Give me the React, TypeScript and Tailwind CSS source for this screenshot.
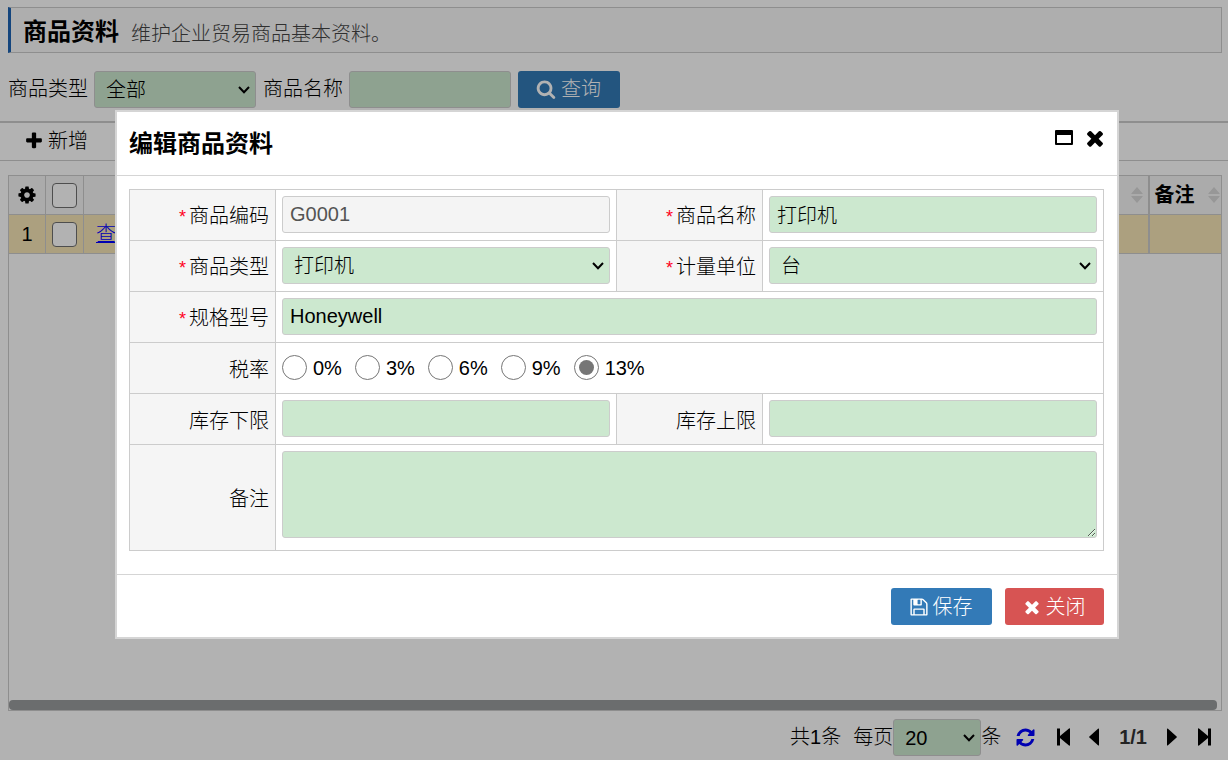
import React from "react";

const PATHS = {
  plus: "M1600 736v192q0 40-28 68t-68 28h-416v416q0 40-28 68t-68 28h-192q-40 0-68-28t-28-68v-416h-416q-40 0-68-28t-28-68v-192q0-40 28-68t68-28h416v-416q0-40 28-68t68-28h192q40 0 68 28t28 68v416h416q40 0 68 28t28 68z",
  search:
    "M1216 832q0-185-131.5-316.5t-316.5-131.5-316.5 131.5-131.5 316.5 131.5 316.5 316.5 131.5 316.5-131.5 131.5-316.5zm512 832q0 52-38 90t-90 38q-54 0-90-38l-343-342q-179 124-399 124-143 0-273.5-55.5t-225-150-150-225-55.5-273.5 55.5-273.5 150-225 225-150 273.5-55.5 273.5 55.5 225 150 150 225 55.5 273.5q0 220-124 399l343 343q37 37 37 90z",
  cog: "M1152 896q0-106-75-181t-181-75-181 75-75 181 75 181 181 75 181-75 75-181zm512-109v222q0 12-8 23t-20 13l-185 28q-19 54-39 91 35 50 107 138 10 12 10 25t-9 23q-27 37-99 108t-94 71q-12 0-26-9l-138-108q-44 23-91 38-16 136-29 186-7 28-36 28h-222q-14 0-24.5-8.5t-11.5-21.5l-28-184q-49-16-90-37l-141 107q-10 9-25 9-14 0-25-11-126-114-165-168-7-10-7-23 0-12 8-23 15-21 51-66.5t54-70.5q-27-50-41-99l-183-27q-13-2-21-12.5t-8-23.5v-222q0-12 8-23t19-13l186-28q14-46 39-92-40-57-107-138-10-12-10-24 0-10 9-23 26-36 98.5-107.5t94.5-71.5q13 0 26 10l138 107q44-23 91-38 16-136 29-186 7-28 36-28h222q14 0 24.5 8.5t11.5 21.5l28 184q49 16 90 37l142-107q9-9 24-9 13 0 25 10 129 119 165 170 7 8 7 22 0 12-8 23-15 21-51 66.5t-54 70.5q26 50 41 98l183 28q13 2 21 12.5t8 23.5z",
  close:
    "M1490 1322q0 40-28 68l-136 136q-28 28-68 28t-68-28l-294-294-294 294q-28 28-68 28t-68-28l-136-136q-28-28-28-68t28-68l294-294-294-294q-28-28-28-68t28-68l136-136q28-28 68-28t68 28l294 294 294-294q28-28 68-28t68 28l136 136q28 28 28 68t-28 68l-294 294 294 294q28 28 28 68z",
  save: "M512 1536h768v-384h-768v384zm896 0h128v-896q0-14-10-38.5t-20-34.5l-281-281q-10-10-34-20t-39-10v416q0 40-28 68t-68 28h-576q-40 0-68-28t-28-68v-416h-128v1280h128v-416q0-40 28-68t68-28h832q40 0 68 28t28 68v416zm-384-928v-320q0-13-9.5-22.5t-22.5-9.5h-192q-13 0-22.5 9.5t-9.5 22.5v320q0 13 9.5 22.5t22.5 9.5h192q13 0 22.5-9.5t9.5-22.5zm640 32v928q0 40-28 68t-68 28h-1344q-40 0-68-28t-28-68v-1344q0-40 28-68t68-28h928q40 0 88 20t76 48l280 280q28 28 48 76t20 88z",
  refresh:
    "M1639 1056q0 5-1 7-64 268-268 434.5t-478 166.5q-146 0-282.5-55t-243.5-157l-129 129q-19 19-45 19t-45-19-19-45v-448q0-26 19-45t45-19h448q26 0 45 19t19 45-19 45l-137 137q71 66 161 102t187 36q134 0 250-65t186-179q11-17 53-117 8-23 30-23h192q13 0 22.5 9.5t9.5 22.5zm25-800v448q0 26-19 45t-45 19h-448q-26 0-45-19t-19-45 19-45l138-138q-148-137-349-137-134 0-250 65t-186 179q-11 17-53 117-8 23-30 23h-199q-13 0-22.5-9.5t-9.5-22.5v-7q65-268 270-434.5t480-166.5q146 0 284 55.5t245 156.5l130-129q19-19 45-19t45 19 19 45z",
};

function Icon({ name, className = "size-5" }: { name: keyof typeof PATHS; className?: string }) {
  return (
    <svg viewBox="0 0 1792 1792" fill="currentColor" aria-hidden="true" className={`block shrink-0 ${className}`}>
      <path d={PATHS[name]} />
    </svg>
  );
}

const FIELD = "block w-full h-[37px] rounded-[3px] border border-[#ccc] text-[20px] font-light outline-none";

function TextField({ id, value, disabled }: { id: string; value?: string; disabled?: boolean }) {
  return (
    <input
      id={id}
      type="text"
      defaultValue={value}
      disabled={disabled}
      className={`${FIELD} px-[7px] ${disabled ? "bg-[#f4f4f4] text-[#545454]" : "bg-[#cce8cf] text-black"}`}
    />
  );
}

function SelectField({ id, value, label }: { id: string; value: string; label?: string }) {
  return (
    <div className="relative">
      <select
        id={id}
        aria-label={label}
        defaultValue={value}
        className={`${FIELD} appearance-none bg-[#cce8cf] pt-px pr-6 pl-[11px] text-black`}
      >
        <option>{value}</option>
      </select>
      <svg
        viewBox="0 0 12 8"
        aria-hidden="true"
        className="pointer-events-none absolute top-[15px] right-[6px] h-2 w-3 fill-none stroke-current stroke-2"
      >
        <path d="M1 1l5 5.200L11 1" />
      </svg>
    </div>
  );
}

function Label({ htmlFor, required, children }: { htmlFor?: string; required?: boolean; children: React.ReactNode }) {
  return (
    <th className="border border-[#ccc] bg-[#f5f5f5] px-[6px] pt-[3px] text-right font-light">
      <label htmlFor={htmlFor} className="whitespace-nowrap">
        {required && <span className="mr-[3px] text-[18px] text-[#ff0022]">*</span>}
        {children}
      </label>
    </th>
  );
}

const CELL = "border border-[#ccc] px-[6px] pt-[6px] pb-[7px]";

function SortIcon() {
  return (
    <svg viewBox="0 0 12 18" aria-hidden="true" className="h-[18px] w-3 shrink-0 fill-[#d8d8d8]">
      <path d="M6 1l6 7H0zM6 17l6-7H0z" />
    </svg>
  );
}

function CheckBox({ label }: { label: string }) {
  return (
    <input
      type="checkbox"
      aria-label={label}
      className="mx-auto block size-[25px] appearance-none rounded-[4px] border border-[#707070] bg-white"
    />
  );
}

function ListPage() {
  return (
    <div className="flex min-h-screen flex-col bg-white pt-[7px]">
      <header className="mr-[6px] ml-2 flex h-[46px] items-center gap-3 border border-l-[3px] border-[#ccc] border-l-[#1e64b4] bg-[#fafafa] pt-1 pl-3">
        <h1 className="text-[24px] leading-8 font-bold">商品资料</h1>
        <p className="pt-[3px] text-[#444]">维护企业贸易商品基本资料。</p>
      </header>

      <form className="mt-[17px] flex h-[38px] items-center px-2" onSubmit={(e) => e.preventDefault()}>
        <label htmlFor="q-type" className="mr-[6px]">
          商品类型
        </label>
        <div className="w-[162px]">
          <SelectField id="q-type" value="全部" />
        </div>
        <label htmlFor="q-name" className="mr-[6px] ml-[7px]">
          商品名称
        </label>
        <div className="w-[162px]">
          <TextField id="q-name" />
        </div>
        <button className="ml-[7px] flex h-[37px] w-[102px] items-center justify-center gap-[5px] rounded-[3px] bg-[#337ab7] pr-px text-white">
          <Icon name="search" />
          查询
        </button>
      </form>

      <div className="mt-[13px] flex h-10 items-center border-t-2 border-b border-[#ccc] pb-[2px] pl-6">
        <button className="flex items-center gap-1">
          <Icon name="plus" />
          新增
        </button>
      </div>

      <div className="mt-[14px] mr-[6px] ml-2 flex flex-1 flex-col justify-between border border-[#ccc]">
        <table className="-mt-px -ml-px w-[calc(100%+2px)] table-fixed border-collapse">
          <thead>
            <tr className="h-[39px] bg-[#f5f5f5]">
              <th className="w-[37px] border border-[#ccc]">
                <button aria-label="列设置" className="mx-auto block">
                  <Icon name="cog" />
                </button>
              </th>
              <th className="w-[38px] border border-[#ccc]">
                <CheckBox label="全选" />
              </th>
              <th className="border border-[#ccc]">
                <div className="flex justify-end pr-[5px]">
                  <SortIcon />
                </div>
              </th>
              <th className="w-[73px] border border-l-2 border-[#ccc]">
                <div className="flex items-center justify-between pr-px pl-[5px] font-bold">
                  备注
                  <SortIcon />
                </div>
              </th>
            </tr>
          </thead>
          <tbody>
            <tr className="h-[39px] bg-[#f7e5b7]">
              <td className="border border-[#ccc] text-center">1</td>
              <td className="border border-[#ccc]">
                <CheckBox label="选择第1行" />
              </td>
              <td className="border border-[#ccc] pl-3">
                <a href="#view" className="text-[#0000ff] underline decoration-1">
                  查看
                </a>
              </td>
              <td className="border border-l-2 border-[#ccc]" />
            </tr>
          </tbody>
        </table>
        <div className="mr-1 h-[10px] rounded-[4px] bg-[#9a9c9e]" />
      </div>

      <footer className="flex h-[49px] items-center justify-end pt-[3px] pr-[17px]">
        <span className="mr-3">共1条</span>
        <label htmlFor="page-size">每页</label>
        <div className="w-[88px]">
          <SelectField id="page-size" value="20" />
        </div>
        <span>条</span>
        <button aria-label="刷新" className="ml-[14px] text-[#0000ff]">
          <Icon name="refresh" className="size-[21px]" />
        </button>
        <button aria-label="首页" className="ml-[21px]">
          <svg viewBox="0 0 13 18" className="block h-[18px] w-[13px] fill-current">
            <path d="M0 .5h3v7.600L12 .5q1-.5 1 .5v16q0 1-1 .5L3 9.900V17.500H0z" />
          </svg>
        </button>
        <button aria-label="上一页" className="ml-[19px]">
          <svg viewBox="0 0 10 18" className="block h-[18px] w-[10px] fill-current">
            <path d="M10 1v16q0 1-1 .3L.4 9.600q-.6-.6 0-1.200L9 .7q1-.7 1 .3z" />
          </svg>
        </button>
        <span className="mx-5 font-bold text-[#333]">1/1</span>
        <button aria-label="下一页">
          <svg viewBox="0 0 10 18" className="block h-[18px] w-[10px] fill-current">
            <path d="M0 1v16q0 1 1 .3l8.600-7.700q.6-.6 0-1.200L1 .7Q0 0 0 1z" />
          </svg>
        </button>
        <button aria-label="末页" className="ml-[21px]">
          <svg viewBox="0 0 13 18" className="block h-[18px] w-[13px] fill-current">
            <path d="M13 .5h-3v7.600L1 .5Q0 0 0 1v16q0 1 1 .5l9-7.600v7.600h3z" />
          </svg>
        </button>
      </footer>
    </div>
  );
}

function EditDialog() {
  return (
    <div className="fixed inset-0 flex items-start bg-black/30 pt-[110px] pr-[109px] pl-[115px]">
      <div role="dialog" aria-labelledby="dialog-title" className="w-full border-2 border-[#d5d5d5] bg-white">
        <div className="flex h-16 items-center justify-between border-b border-[#d5d5d5] pr-[10px] pl-3">
          <h2 id="dialog-title" className="text-[24px] leading-8 font-bold">
            编辑商品资料
          </h2>
          <div className="flex items-center gap-[10px] pb-3">
            <button aria-label="最大化">
              <svg viewBox="0 0 18 15" className="block h-[15px] w-[18px] fill-current">
                <path fillRule="evenodd" d="M1 0h16Q18 0 18 1v13Q18 15 17 15H1Q0 15 0 14V1Q0 0 1 0zM2 5v8h14V5z" />
              </svg>
            </button>
            <button aria-label="关闭窗口">
              <Icon name="close" className="size-6" />
            </button>
          </div>
        </div>

        <form className="pt-[13px] pr-[13px] pb-[23px] pl-3" onSubmit={(e) => e.preventDefault()}>
          <table className="w-full table-fixed border-collapse">
            <colgroup>
              <col className="w-[146px]" />
              <col />
              <col className="w-[146px]" />
              <col />
            </colgroup>
            <tbody>
              <tr>
                <Label htmlFor="code" required>
                  商品编码
                </Label>
                <td className={CELL}>
                  <TextField id="code" value="G0001" disabled />
                </td>
                <Label htmlFor="name" required>
                  商品名称
                </Label>
                <td className={CELL}>
                  <TextField id="name" value="打印机" />
                </td>
              </tr>
              <tr>
                <Label htmlFor="type" required>
                  商品类型
                </Label>
                <td className={CELL}>
                  <SelectField id="type" value="打印机" />
                </td>
                <Label htmlFor="unit" required>
                  计量单位
                </Label>
                <td className={CELL}>
                  <SelectField id="unit" value="台" />
                </td>
              </tr>
              <tr>
                <Label htmlFor="model" required>
                  规格型号
                </Label>
                <td className={CELL} colSpan={3}>
                  <TextField id="model" value="Honeywell" />
                </td>
              </tr>
              <tr>
                <Label>税率</Label>
                <td className={CELL} colSpan={3}>
                  <div className="flex h-[37px] items-center gap-[13px]">
                    {["0%", "3%", "6%", "9%", "13%"].map((rate) => (
                      <label key={rate} className="flex items-center gap-[6px]">
                        <input
                          type="radio"
                          name="rate"
                          defaultChecked={rate === "13%"}
                          className="size-[25px] appearance-none rounded-full border border-[#767676] bg-white p-[4px] checked:bg-[#767676] checked:bg-clip-content"
                        />
                        {rate}
                      </label>
                    ))}
                  </div>
                </td>
              </tr>
              <tr>
                <Label htmlFor="min">库存下限</Label>
                <td className={CELL}>
                  <TextField id="min" />
                </td>
                <Label htmlFor="max">库存上限</Label>
                <td className={CELL}>
                  <TextField id="max" />
                </td>
              </tr>
              <tr>
                <Label htmlFor="note">备注</Label>
                <td className="border border-[#ccc] px-[6px] pt-[6px] pb-3" colSpan={3}>
                  <textarea
                    id="note"
                    className="block h-[87px] w-full rounded-[3px] border border-[#ccc] bg-[#cce8cf] px-[7px] outline-none"
                  />
                </td>
              </tr>
            </tbody>
          </table>
        </form>

        <div className="flex justify-end gap-[13px] border-t border-[#d5d5d5] pt-[13px] pr-[13px] pb-3 pl-3">
          <button className="flex h-[37px] w-[101px] items-center justify-center gap-1 rounded-[3px] bg-[#337ab7] pr-[2px] text-white">
            <Icon name="save" />
            保存
          </button>
          <button className="flex h-[37px] w-[99px] items-center justify-center gap-1 rounded-[3px] bg-[#d75453] pr-[2px] text-white">
            <Icon name="close" />
            关闭
          </button>
        </div>
      </div>
    </div>
  );
}

export default function App() {
  return (
    <div className="font-['Liberation_Sans','Noto_Sans_CJK_SC',sans-serif] text-[20px] leading-6 font-light text-black">
      <ListPage />
      <EditDialog />
    </div>
  );
}
